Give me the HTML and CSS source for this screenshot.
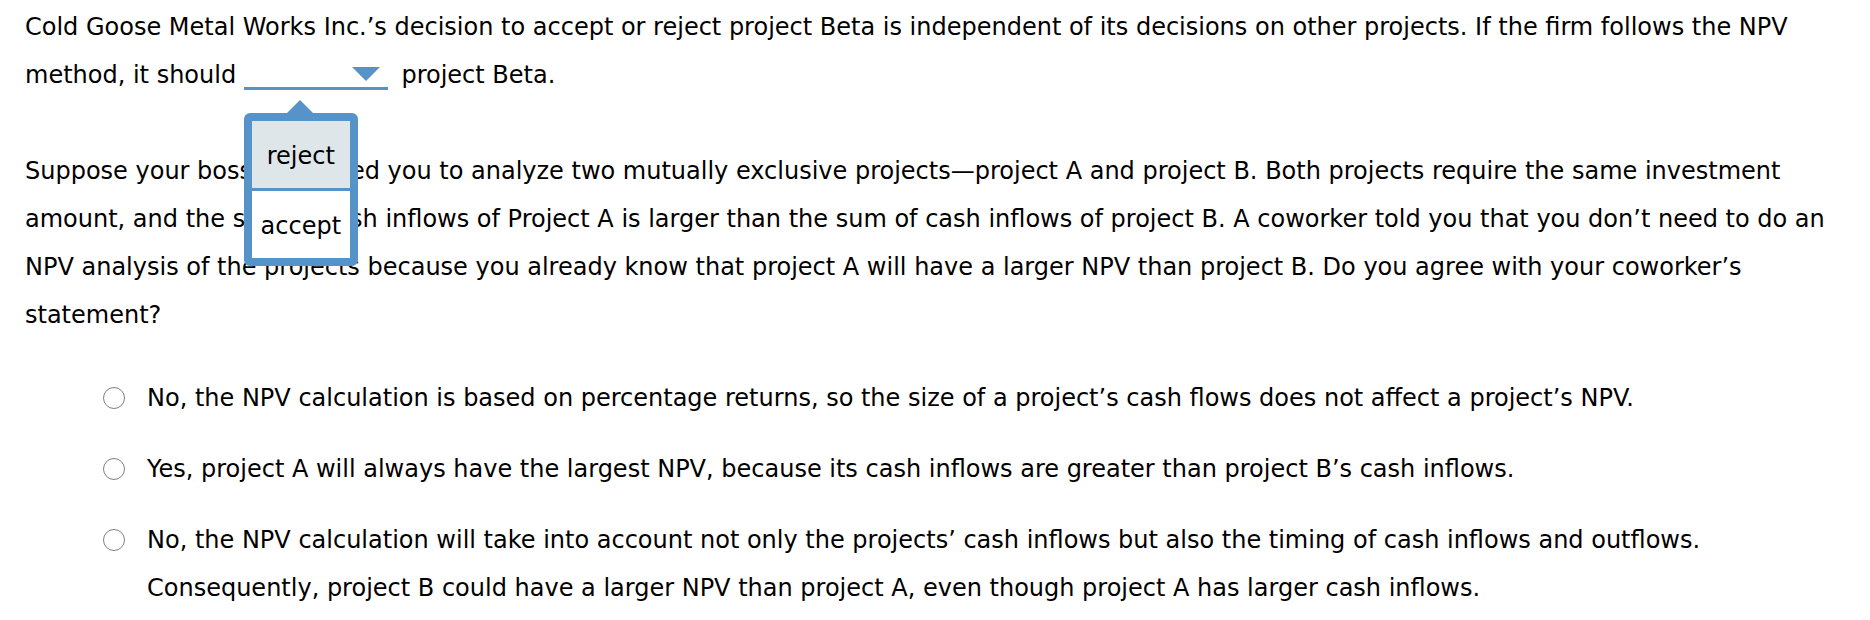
FILE: index.html
```html
<!DOCTYPE html>
<html>
<head>
<meta charset="utf-8">
<link rel="stylesheet" href="styles.css">
</head>
<body>
<div class="page">
  <p class="para">Cold Goose Metal Works Inc.’s decision to accept or reject project Beta is independent of its decisions on other projects. If the firm follows the NPV method, it should <span class="dropdown"><span class="caret"></span><span class="menu"><span class="menu-item selected">reject</span><span class="menu-item">accept</span></span></span> project Beta.</p>
  <p class="para question">Suppose your boss has asked you to analyze two mutually exclusive projects—project A and project B. Both projects require the same investment amount, and the sum of cash inflows of Project A is larger than the sum of cash inflows of project B. A coworker told you that you don’t need to do an NPV analysis of the projects because you already know that project A will have a larger NPV than project B. Do you agree with your coworker’s statement?</p>
  <ul class="options">
    <li class="option"><span class="radio"></span><span class="option-text">No, the NPV calculation is based on percentage returns, so the size of a project’s cash flows does not affect a project’s NPV.</span></li>
    <li class="option"><span class="radio"></span><span class="option-text">Yes, project A will always have the largest NPV, because its cash inflows are greater than project B’s cash inflows.</span></li>
    <li class="option"><span class="radio"></span><span class="option-text">No, the NPV calculation will take into account not only the projects’ cash inflows but also the timing of cash inflows and outflows. Consequently, project B could have a larger NPV than project A, even though project A has larger cash inflows.</span></li>
  </ul>
</div>
</body>
</html>
```

FILE: styles.css
```css
html, body {
  margin: 0;
  padding: 0;
  background: #ffffff;
}
.page {
  font-family: "DejaVu Sans", Verdana, sans-serif;
  font-size: 24px;
  line-height: 48px;
  color: #000000;
  padding: 3px 20px 0 25px;
}
.para {
  margin: 0 0 48px 0;
}
.para.question {
  margin-bottom: 35px;
}
.dropdown {
  position: relative;
  display: inline-block;
  width: 144px;
  height: 20px;
  border-bottom: 3px solid #5593c8;
  vertical-align: -7px;
  margin: 0 6px 0 0;
}
.caret {
  position: absolute;
  right: 8px;
  top: 0;
  width: 0;
  height: 0;
  border-left: 14px solid transparent;
  border-right: 14px solid transparent;
  border-top: 14px solid #5593c8;
}
.menu {
  position: absolute;
  left: 0;
  top: 46px;
  width: 114px;
  border: 8px solid #5593c8;
  border-radius: 6px;
  box-sizing: border-box;
  background: #ffffff;
  display: flex;
  flex-direction: column;
  z-index: 5;
}
.menu::before {
  content: "";
  position: absolute;
  left: 35px;
  top: -21px;
  border-left: 13px solid transparent;
  border-right: 13px solid transparent;
  border-bottom: 13px solid #5593c8;
}
.menu-item {
  display: block;
  height: 67px;
  line-height: 71px;
  text-align: center;
  overflow: hidden;
}
.menu-item.selected {
  background: #dee6ea;
  border-bottom: 3px solid #5593c8;
}
.options {
  list-style: none;
  margin: 0;
  padding: 0 0 0 78px;
}
.option {
  display: flex;
  align-items: flex-start;
  margin-bottom: 23px;
}
.radio {
  flex: none;
  width: 22px;
  height: 22px;
  box-sizing: border-box;
  border: 1.5px solid #808080;
  border-radius: 50%;
  margin-top: 13px;
  margin-right: 22px;
}
.option-text {
  flex: 1;
}
```
